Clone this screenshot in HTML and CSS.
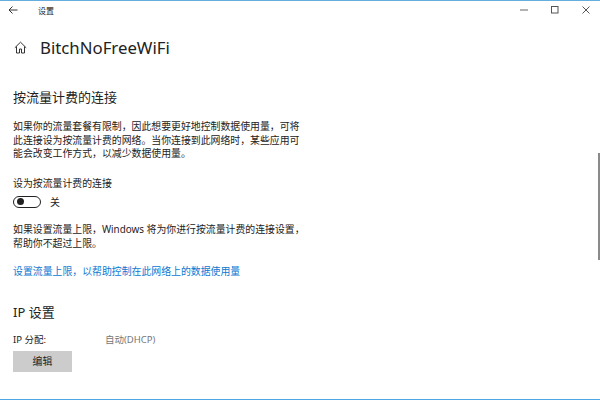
FILE: index.html
```html
<!DOCTYPE html>
<html lang="zh-CN">

<head>
    <meta charset="UTF-8">
    <title>设置</title>
    <link rel="stylesheet" href="styles.css">
</head>

<body>
    <div class="window">
        <div class="titlebar">
            <svg class="back" width="10" height="10" viewBox="0 0 10 10">
                <path d="M9.500 5H1M4.500 1.500L1 5l3.500 3.500" fill="none" stroke="#333" stroke-width="1"></path>
            </svg>
            <span class="app-name">设置</span>
            <div class="controls">
                <svg width="8" height="8" viewBox="0 0 8 8">
                    <path d="M0 4h8" stroke="#666" stroke-width="1"></path>
                </svg>
                <svg width="8" height="8" viewBox="0 0 8 8">
                    <rect x="0.500" y="0.500" width="6.500" height="6.500" fill="none" stroke="#555" stroke-width="1"></rect>
                </svg>
                <svg width="8" height="8" viewBox="0 0 8 8">
                    <path d="M0.500 0.500l7 7M7.500 0.500l-7 7" stroke="#555" stroke-width="1"></path>
                </svg>
            </div>
        </div>

        <div class="content">
            <div class="page-head">
                <svg class="home" width="13" height="13" viewBox="0 0 13 13">
                    <path d="M0.800 6.800L6.500 1.200l5.700 5.600M2.500 5.500v6.500h3v-4h2v4h3V5.500" fill="none" stroke="#333" stroke-width="1"></path>
                </svg>
                <h1>BitchNoFreeWiFi</h1>
            </div>

            <h2 class="first">按流量计费的连接</h2>
            <p class="desc">如果你的流量套餐有限制，因此想要更好地控制数据使用量，可将此连接设为按流量计费的网络。当你连接到此网络时，某些应用可能会改变工作方式，以减少数据使用量。</p>

            <div class="label">设为按流量计费的连接</div>
            <div class="toggle-row">
                <span class="toggle"><span class="knob"></span></span>
                <span>关</span>
            </div>

            <p class="desc limit">如果设置流量上限，Windows 将为你进行按流量计费的连接设置，帮助你不超过上限。</p>
            <a class="link" href="#">设置流量上限，以帮助控制在此网络上的数据使用量</a>

            <h2 class="ip">IP 设置</h2>
            <div class="ip-row">
                <span class="ip-key">IP 分配:</span>
                <span class="ip-value">自动(DHCP)</span>
            </div>
            <button class="edit">编辑</button>
        </div>

        <div class="scrollbar"></div>
    </div>
</body>

</html>
```

FILE: styles.css
```css
* {
    box-sizing: border-box;
}

html,
body {
    margin: 0;
    padding: 0;
}

body {
    font-family: "Noto Sans", "Noto Sans CJK SC", sans-serif;
    color: #222;
    background-color: white;
}

.window {
    position: relative;
    width: 600px;
    height: 400px;
    overflow: hidden;
    border-top: 1px solid #63addf;
    border-bottom: 1px solid #4ea6e2;
}

.titlebar {
    display: flex;
    align-items: center;
    height: 20px;
    padding-left: 8px;
    padding-bottom: 2px;
}

.back {
    margin-right: 20px;
}

.app-name {
    font-size: 8px;
}

.controls {
    display: flex;
    align-items: center;
    gap: 23px;
    margin-left: auto;
    margin-right: 10px;
}

.content {
    padding: 0 13px;
}

.page-head {
    display: flex;
    align-items: center;
    height: 34px;
    margin-top: 9px;
}

.home {
    margin-left: 1px;
    margin-right: 13px;
}

h1 {
    margin: 0;
    font-size: 16.800px;
    font-weight: 400;
}

h2 {
    margin: 0;
    font-size: 13px;
    line-height: 18px;
    font-weight: 400;
}

.first {
    margin-top: 24px;
}

.desc {
    width: 290px;
    margin: 14px 0 0;
    font-size: 9.900px;
    line-height: 13.500px;
}

.label {
    margin-top: 15px;
    font-size: 9.900px;
    line-height: 14px;
}

.toggle-row {
    display: flex;
    align-items: center;
    gap: 9px;
    height: 14px;
    margin-top: 5px;
    font-size: 9.900px;
}

.toggle {
    display: flex;
    align-items: center;
    width: 28px;
    height: 12px;
    padding-left: 2.500px;
    border: 1.500px solid #222;
    border-radius: 6px;
}

.knob {
    width: 7px;
    height: 7px;
    border-radius: 50%;
    background-color: #222;
}

.limit {
    width: 297px;
    margin-top: 13px;
    line-height: 14px;
}

.link {
    display: block;
    margin-top: 14px;
    font-size: 9.900px;
    line-height: 14px;
    color: #0a78d2;
    text-decoration: none;
}

.ip {
    margin-top: 25px;
}

.ip-row {
    display: flex;
    margin-top: 12px;
    font-size: 9.500px;
    line-height: 14px;
}

.ip-key {
    width: 92px;
}

.ip-value {
    color: #777;
}

.edit {
    display: block;
    width: 59px;
    height: 21px;
    margin-top: 4px;
    padding: 0;
    border: 0;
    background-color: #ccc;
    color: #222;
    font: inherit;
    font-size: 9.900px;
}

.scrollbar {
    position: absolute;
    top: 152px;
    right: 0;
    width: 2px;
    height: 107px;
    background-color: #8a8a8a;
}
```
